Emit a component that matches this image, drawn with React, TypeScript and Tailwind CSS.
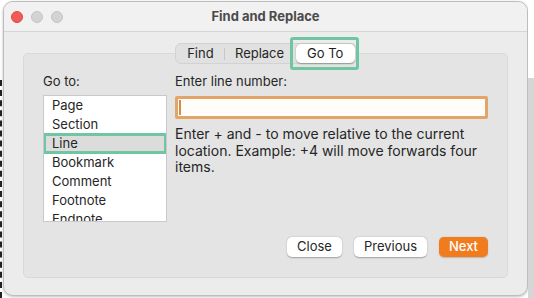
import React from "react";

const items = ["Page", "Section", "Line", "Bookmark", "Comment", "Footnote", "Endnote"];

export default function App() {
  return (
    <div
      className="w-[534px] h-[298px] bg-white flex overflow-hidden text-[13px] text-[#262626]"
      style={{ fontFamily: "Inter, 'Noto Sans', sans-serif" }}
    >
      {/* left backdrop strip */}
      <div className="w-[3px] h-full flex flex-col">
        <div className="h-[80px]" />
        <div className="flex-1 border-l-2 border-dashed border-[#222] ml-[0px]" />
      </div>

      {/* window */}
      <div className="w-[525px] h-[295px] mt-[1px] rounded-[10px] border border-[#bdbdbd] bg-[#ececec] flex flex-col overflow-hidden shadow-[0_1px_3px_rgba(0,0,0,0.25)]">
        {/* title bar */}
        <div className="h-[30px] shrink-0 bg-[#f1f1f1] border-b border-[#d6d6d6] grid grid-cols-[1fr_auto_1fr] items-center">
          <div className="flex items-center gap-[8px] pl-[7px]">
            <span className="w-[12px] h-[12px] rounded-full bg-[#f05b55] border border-[#dc4a44]" />
            <span className="w-[12px] h-[12px] rounded-full bg-[#d3d3d3] border border-[#c4c4c4]" />
            <span className="w-[12px] h-[12px] rounded-full bg-[#d3d3d3] border border-[#c4c4c4]" />
          </div>
          <div className="font-bold text-[13px] text-[#4b4b4b]">Find and Replace</div>
          <div />
        </div>

        {/* body */}
        <div className="flex-1 px-[19px] pt-[21px] pb-[17px] flex">
          <div className="relative flex-1 rounded-[5px] border border-[#d9d9d9] bg-[#e4e4e4] flex flex-col px-[19px] pt-[19px] pb-[20px]">
            {/* segmented tabs */}
            <div className="absolute -top-[11px] left-0 right-0 flex justify-center">
              <div className="relative h-[21px] w-[182px] rounded-[6px] bg-[#e1e1e1] border border-[#d2d2d2] flex items-center pl-[1px] pr-[1px]">
                <div className="w-[48px] text-center">Find</div>
                <div className="w-px h-[12px] bg-[#c7c7c7]" />
                <div className="w-[69px] text-center">Replace</div>
                <div className="ml-[2px] w-[59px] h-[19px] rounded-[5px] bg-white shadow-[0_0.5px_1.5px_rgba(0,0,0,0.3)] flex items-center justify-center text-[#1e1e1e]">
                  Go To
                </div>
                <div className="absolute -right-[3px] -top-[7px] w-[69px] h-[33px] rounded-[3px] border-[3px] border-[#70c6a2]" />
              </div>
            </div>

            <div className="flex gap-[8px]">
              {/* left column */}
              <div className="w-[124px] flex flex-col">
                <div className="h-[16px] leading-[16px]">Go to:</div>
                <div className="mt-[6px] h-[127px] border border-[#c9c9c9] bg-white overflow-hidden">
                  {items.map((it) =>
                    it === "Line" ? (
                      <div
                        key={it}
                        className="h-[19px] leading-[19px] pl-[8px] bg-[#dcdcdc] outline-[3px] outline-solid outline-[#70c6a2] -outline-offset-[2px]"
                      >
                        {it}
                      </div>
                    ) : (
                      <div key={it} className="h-[19px] leading-[19px] pl-[8px]">
                        {it}
                      </div>
                    )
                  )}
                </div>
              </div>

              {/* right column */}
              <div className="flex-1 flex flex-col">
                <div className="h-[16px] leading-[16px]">Enter line number:</div>
                <div className="mt-[7px] h-[23px] border-[3px] border-[#e3a468] rounded-[2px] bg-[#fffdfa] flex items-center pl-[1px]">
                  <div className="w-[2px] h-[15px] bg-[#d58c40]" />
                </div>
                <p className="mt-[7px] text-[14px] leading-[16.5px] pr-[8px]">
                  Enter + and - to move relative to the current location. Example: +4 will move forwards four items.
                </p>
              </div>
            </div>

            {/* buttons */}
            <div className="mt-auto flex justify-end gap-[12px]">
              <button className="h-[20px] w-[55px] rounded-[5px] bg-white shadow-[0_0.5px_1.5px_rgba(0,0,0,0.3)] text-[#262626]">
                Close
              </button>
              <button className="h-[20px] w-[73px] rounded-[5px] bg-white shadow-[0_0.5px_1.5px_rgba(0,0,0,0.3)] text-[#262626]">
                Previous
              </button>
              <button className="h-[20px] w-[49px] rounded-[5px] bg-[#f07c1e] shadow-[0_0.5px_1.5px_rgba(0,0,0,0.2)] text-white font-medium">
                Next
              </button>
            </div>
          </div>
        </div>
      </div>

      {/* right backdrop strip */}
      <div className="flex-1 flex flex-col">
        <div className="h-[78px] bg-white" />
        <div className="flex-1 bg-[#d6d6d6]" />
      </div>
    </div>
  );
}
